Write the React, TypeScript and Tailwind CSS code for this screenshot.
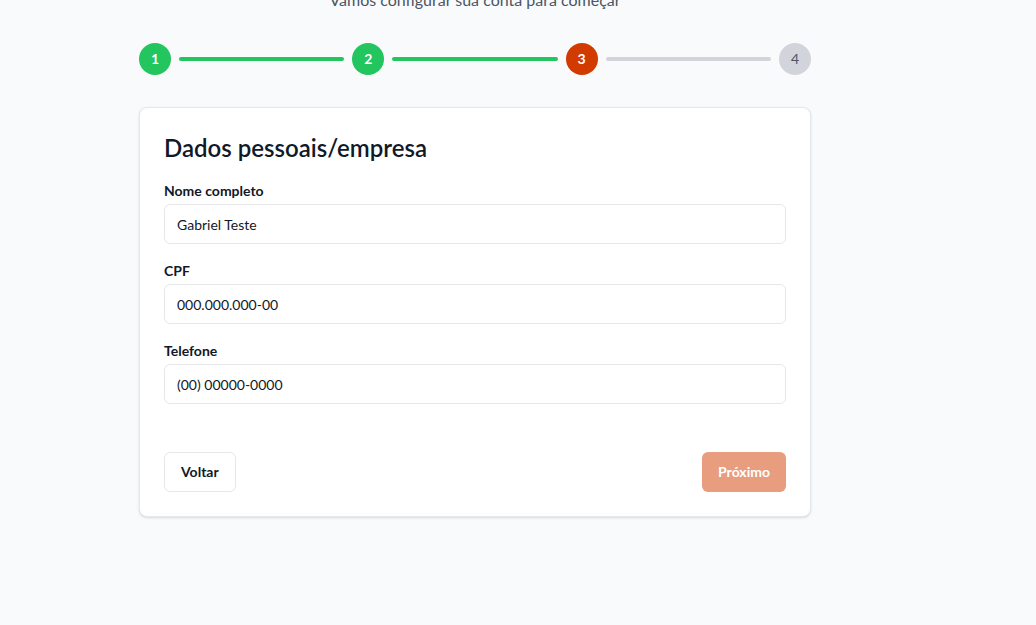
const steps = [
  { n: 1, state: 'done' },
  { n: 2, state: 'done' },
  { n: 3, state: 'current' },
  { n: 4, state: 'todo' },
];

function Stepper() {
  return (
    <div className="flex items-center">
      {steps.map((s, i) => (
        <div key={s.n} className={`flex items-center ${i < steps.length - 1 ? 'flex-1' : ''}`}>
          <div
            className={`w-8 h-8 rounded-full flex items-center justify-center text-sm shrink-0 ${
              s.state === 'done'
                ? 'bg-[#22c55e] text-white font-bold'
                : s.state === 'current'
                ? 'bg-[#d13b00] text-white font-bold'
                : 'bg-[#d1d5db] text-[#4b5563]'
            }`}
          >
            {s.n}
          </div>
          {i < steps.length - 1 && (
            <div
              className={`flex-1 h-1 mx-2 rounded ${
                steps[i + 1].state !== 'todo' ? 'bg-[#22c55e]' : 'bg-[#d1d5db]'
              }`}
            />
          )}
        </div>
      ))}
    </div>
  );
}

function Field({ label, value }: { label: string; value: string }) {
  return (
    <div>
      <label className="block text-sm font-bold text-[#111827] mb-[3px] leading-[21px]">{label}</label>
      <input
        readOnly
        value={value}
        className="w-full h-10 px-3 text-sm text-[#111827] bg-white border border-[#e5e7eb] rounded-md outline-none"
      />
    </div>
  );
}

export default function App() {
  return (
    <div
      className="min-h-screen bg-[#f9fafb] overflow-hidden"
      style={{ fontFamily: 'Lato, "Noto Sans", sans-serif' }}
    >
      <div className="w-[672px] ml-[139px]">
        <p className="text-center text-base text-[#4b5563] mt-[-12px] mb-[31px]">
          Vamos configurar sua conta para começar
        </p>
        <Stepper />
        <div className="mt-8 bg-white border border-[#e5e7eb] rounded-lg shadow-sm p-6">
          <h2 className="text-2xl font-semibold text-[#111827] mb-4 leading-8">Dados pessoais/empresa</h2>
          <div className="space-y-4">
            <Field label="Nome completo" value="Gabriel Teste" />
            <Field label="CPF" value="000.000.000-00" />
            <Field label="Telefone" value="(00) 00000-0000" />
          </div>
          <div className="flex justify-between mt-12">
            <button className="h-10 px-4 text-sm font-bold text-[#111827] bg-white border border-[#e5e7eb] rounded-md">
              Voltar
            </button>
            <button className="h-10 px-4 text-sm font-bold text-white bg-[#d13b00]/50 rounded-md">
              Próximo
            </button>
          </div>
        </div>
      </div>
    </div>
  );
}
